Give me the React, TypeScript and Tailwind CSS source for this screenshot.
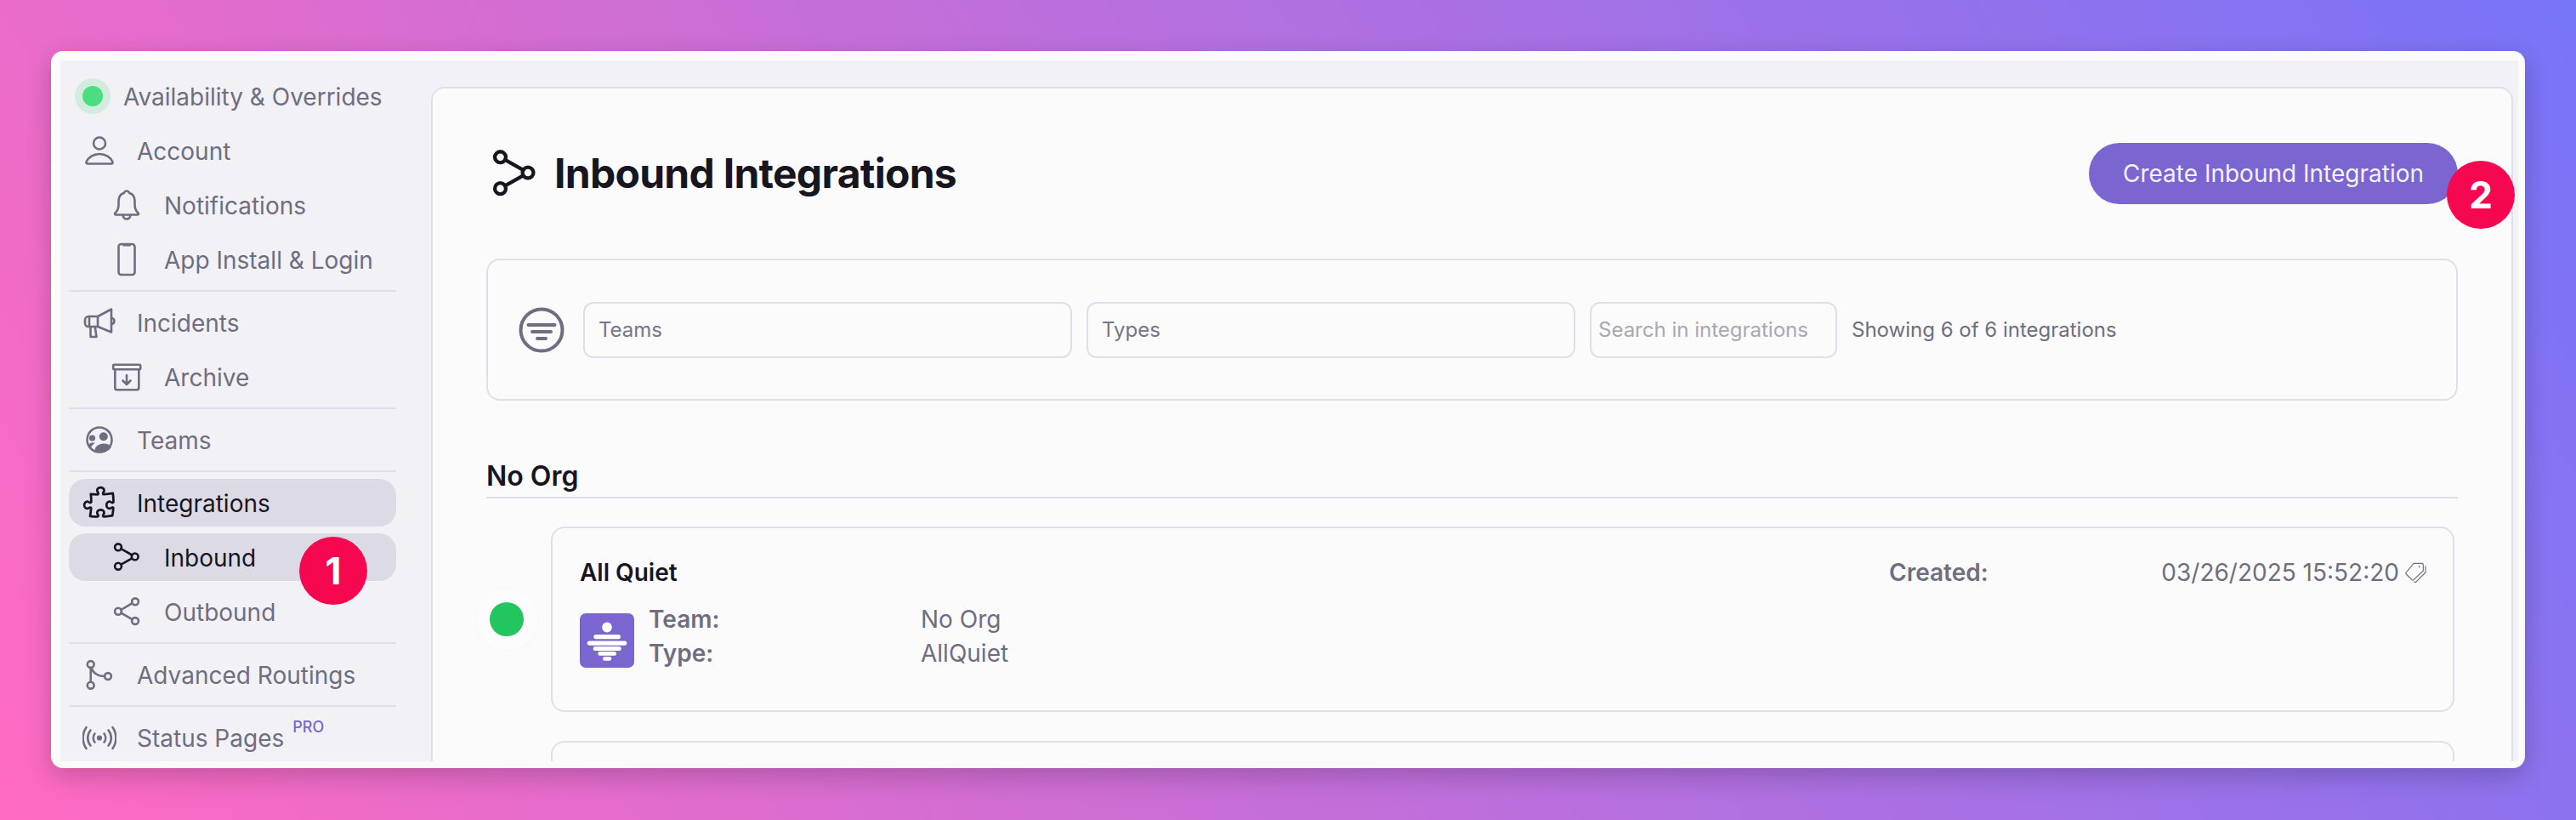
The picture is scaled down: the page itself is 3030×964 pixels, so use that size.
import { HiOutlinePuzzlePiece } from 'react-icons/hi2';

const gray = '#6f6e80';

function Icon({ children, className = '' }: { children: React.ReactNode; className?: string }) {
  return (
    <svg viewBox="0 0 40 40" fill="none" stroke="currentColor" strokeWidth="2.6" strokeLinecap="round" strokeLinejoin="round" className={`w-10 h-10 shrink-0 ${className}`}>
      {children}
    </svg>
  );
}

const UserIcon = () => (
  <Icon>
    <circle cx="20" cy="11.5" r="7" />
    <path d="M6 35.5h28c1.2 0 1.9-.9 1.5-1.9C33.3 28 27 24 20 24S6.700 28 4.500 33.600c-.4 1 .3 1.900 1.500 1.900z" />
  </Icon>
);
const BellIcon = () => (
  <Icon>
    <path d="M20 3.500c-1.500 0-2.500 1-3 2.200-4.500 1.500-6.500 5.300-6.500 9.300v5c0 4-1.500 7-4 9.500-.8.800-.3 2 .8 2h25.400c1.100 0 1.600-1.200.8-2-2.500-2.500-4-5.500-4-9.500v-5c0-4-2-7.800-6.500-9.300-.5-1.200-1.500-2.200-3-2.200z" />
    <path d="M15.500 31.500c.3 3.200 2 5 4.500 5s4.200-1.800 4.500-5" />
  </Icon>
);
const PhoneIcon = () => (
  <Icon>
    <rect x="10.500" y="2" width="19" height="36" rx="3" />
    <path d="M16.500 3.200h7" />
  </Icon>
);
const MegaphoneIcon = () => (
  <Icon>
    <path d="M34 4.500 18 13H7a4 4 0 0 0-4 4v4a4 4 0 0 0 4 4h11l16 6.500z" />
    <path d="M8 13v12M18 13v12M34 15a3.500 3.500 0 0 1 0 7" />
    <path d="M9.500 25v12h7l-1.800-12" />
  </Icon>
);
const ArchiveIcon = () => (
  <Icon>
    <rect x="4.200" y="5.800" width="32" height="5.500" rx="1" />
    <path d="M6.300 11.300V33a2.300 2.300 0 0 0 2.300 2.300h23.400a2.300 2.300 0 0 0 2.300-2.300V11.300" />
    <path d="M20 18v10.500M15.500 24.500l4.500 4.500 4.500-4.500" />
  </Icon>
);
const TeamsIcon = () => (
  <Icon>
    <circle cx="20" cy="20" r="14.500" />
    <circle cx="11.500" cy="18" r="3.600" fill="currentColor" stroke="none" />
    <circle cx="24.800" cy="16.300" r="5" fill="currentColor" stroke="none" />
    <path d="M14.500 33.500C14 28 19 24.500 25 24.500c4 0 7 1.500 9 4A15 15 0 0 1 14.500 33.500z" fill="currentColor" stroke="none" />
    <path d="M6.500 27c1-2.500 3-3.800 5.500-3.800 1 0 2 .2 3 .6-2.800 1.500-4.500 3.700-5.300 6.200z" fill="currentColor" stroke="none" />
  </Icon>
);
const InboundIcon = ({ className = '' }: { className?: string }) => (
  <Icon className={className}>
    <circle cx="10" cy="8.300" r="3.900" />
    <circle cx="29.700" cy="19.400" r="3.900" />
    <circle cx="10" cy="30.700" r="3.900" />
    <path d="m13.400 10.200 12.900 7.300M13.400 28.700l12.900-7.300" />
  </Icon>
);
const OutboundIcon = () => (
  <Icon>
    <circle cx="30" cy="8.300" r="3.900" />
    <circle cx="10" cy="19.700" r="3.900" />
    <circle cx="30" cy="31" r="3.900" />
    <path d="m26.600 10.200-13.200 7.600M13.400 21.600l13.200 7.500" />
  </Icon>
);
const RoutingIcon = () => (
  <Icon>
    <circle cx="9.700" cy="8" r="3.900" />
    <circle cx="9.700" cy="32.700" r="3.900" />
    <circle cx="30" cy="22" r="3.900" />
    <path d="M9.700 12v16.800M10.500 12c1.500 6 7.500 10 15.600 10" />
  </Icon>
);
const StatusIcon = () => (
  <Icon>
    <circle cx="20" cy="20.500" r="1.800" fill="currentColor" />
    <path d="M14.500 15.500a8 8 0 0 0 0 10M25.500 15.500a8 8 0 0 1 0 10" />
    <path d="M9.500 11.500a14 14 0 0 0 0 18M30.500 11.500a14 14 0 0 1 0 18" />
    <path d="M4.500 8a22 22 0 0 0 0 25M35.500 8a22 22 0 0 1 0 25" />
  </Icon>
);

function NavRow({ icon, label, sub, active, extra }: { icon: React.ReactNode; label: string; sub?: boolean; active?: boolean; extra?: React.ReactNode }) {
  return (
    <div className={`h-14 shrink-0 flex items-center gap-6 rounded-[20px] ${sub ? 'pl-12' : 'pl-4'} ${active ? 'bg-[#dcdbe5] text-[#17161f]' : 'text-[#6f6e80]'}`}>
      {icon}
      <span className="text-[28px] leading-none whitespace-nowrap pt-0.5">{label}</span>
      {extra}
    </div>
  );
}

const Divider = () => <div className="h-0.5 shrink-0 bg-[#e0dfe9]" />;

function Badge({ n, className }: { n: number; className: string }) {
  return (
    <div className={`absolute w-20 h-20 rounded-full bg-[#f5084f] text-white flex items-center justify-center text-[44px] font-bold leading-none ${className}`}>
      {n}
    </div>
  );
}

export default function App() {
  return (
    <div className="w-[3030px] h-[964px] pl-[60px] pt-[60px] overflow-hidden bg-[linear-gradient(60deg,#ff6ac1_0%,#7774f7_100%)] font-['Inter',sans-serif]">
      <div className="relative w-[2910px] h-[843px] pl-[11px] pt-[11px] pr-2 pb-2 rounded-[14px] bg-[#fbfbfb] shadow-[0_10px_30px_rgba(0,0,0,0.2)]">
        <div className="w-full h-full flex bg-[#f1f1f6] pt-[31px] pr-1.5 overflow-hidden">
          <aside className="w-[436px] shrink-0 -mt-[17px] pl-2.5 pr-[41px] flex flex-col gap-2">
            <div className="h-14 shrink-0 flex items-center gap-4 pl-[7px] text-[#6f6e80]">
              <div className="w-[42px] h-[42px] rounded-full bg-[#d4ecdf] flex items-center justify-center">
                <div className="w-6 h-6 rounded-full bg-[#4ade80]" />
              </div>
              <span className="text-[28px] leading-none whitespace-nowrap pt-0.5 -ml-px">Availability &amp; Overrides</span>
            </div>
            <NavRow icon={<UserIcon />} label="Account" />
            <NavRow icon={<BellIcon />} label="Notifications" sub />
            <NavRow icon={<PhoneIcon />} label="App Install & Login" sub />
            <Divider />
            <NavRow icon={<MegaphoneIcon />} label="Incidents" />
            <NavRow icon={<ArchiveIcon />} label="Archive" sub />
            <Divider />
            <NavRow icon={<TeamsIcon />} label="Teams" />
            <Divider />
            <NavRow icon={<HiOutlinePuzzlePiece className="w-11 h-11 -mx-0.5 shrink-0" />} label="Integrations" active />
            <NavRow icon={<InboundIcon />} label="Inbound" sub active />
            <NavRow icon={<OutboundIcon />} label="Outbound" sub />
            <Divider />
            <NavRow icon={<RoutingIcon />} label="Advanced Routings" />
            <Divider />
            <NavRow
              icon={<StatusIcon />}
              label="Status Pages"
              extra={<span className="-ml-3.5 mb-6 text-[18px] leading-none font-medium text-[#7b65d0]">PRO</span>}
            />
          </aside>

          <main className="flex-1 min-w-0 h-[calc(100%+2px)] bg-[#fbfbfb] border-2 border-b-0 border-[#e0dfe9] rounded-t-2xl px-[63px] overflow-hidden">
            <div className="mt-[63px] h-[74px] flex items-center justify-between">
              <div className="flex items-center gap-3.5 text-[#17161f]">
                <InboundIcon className="w-[66px] h-[66px]" />
                <h1 className="text-[48px] leading-none font-bold tracking-[-0.015em]">Inbound Integrations</h1>
              </div>
              <button className="h-[72px] w-[434px] rounded-full bg-[#7b65d0] text-[#f3f1fc] text-[28px]">Create Inbound Integration</button>
            </div>

            <div className="mt-[63px] h-[167px] border-2 border-[#e0dfe9] rounded-2xl flex items-center pl-[35px] gap-[17px]">
              <svg viewBox="0 0 56 56" className="w-14 h-14 shrink-0 mr-1" fill="none" stroke={gray} strokeWidth="4">
                <circle cx="28" cy="28" r="24.500" />
                <path d="M12.500 22h31M17 30h22M23 38h10" strokeLinecap="round" />
              </svg>
              <div className="w-[575px] h-[66px] border-2 border-[#e0dfe9] rounded-xl flex items-center pl-4 text-[24px] text-[#76758a]">Teams</div>
              <div className="w-[575px] h-[66px] border-2 border-[#e0dfe9] rounded-xl flex items-center pl-4 text-[24px] text-[#76758a]">Types</div>
              <div className="w-[291px] h-[66px] border-2 border-[#e0dfe9] rounded-xl flex items-center pl-2 text-[24px] text-[#a9a8b6] whitespace-nowrap overflow-hidden">Search in integrations</div>
              <span className="text-[24px] text-[#6f6e80] whitespace-nowrap">Showing 6 of 6 integrations</span>
            </div>

            <div className="mt-[63px] h-[52px] border-b-2 border-[#e0dfe9] text-[32px] font-semibold text-[#17161f] leading-none pt-2.5">No Org</div>

            <div className="mt-[33px] -ml-3.5 pr-1 flex items-center gap-3.5">
              <div className="w-[76px] h-[76px] shrink-0 rounded-full bg-[#fcfcfc] border-2 border-[#f9f9fa] flex items-center justify-center">
                <div className="w-10 h-10 rounded-full bg-[#22c55e]" />
              </div>
              <div className="flex-1 h-[218px] border-2 border-[#e0dfe9] rounded-2xl pl-8 pr-[31px] pt-10 text-[28px] leading-none">
                <div className="flex justify-between h-6 items-center">
                  <span className="font-semibold text-[#17161f]">All Quiet</span>
                  <div className="flex items-center w-[632px] text-[#6f6e80]">
                    <span className="font-semibold">Created:</span>
                    <span className="ml-auto">03/26/2025 15:52:20</span>
                    <svg viewBox="0 0 75 72" className="w-[25px] h-6 ml-[7px]" fill="none" stroke={gray} strokeWidth="3.5" strokeLinejoin="round" strokeLinecap="round">
                      <path d="M30 4h30q4 0 4 4v22L30 62q-3 3-6 0L4 42q-3-3 0-6z" />
                      <path d="M72 14v22L38 70q-2 1-6-1" />
                      <circle cx="50" cy="16" r="3" fill={gray} stroke="none" />
                    </svg>
                  </div>
                </div>
                <div className="mt-[34px] flex items-start">
                  <svg viewBox="0 0 64 64" className="w-16 h-16 shrink-0 mt-0.5" fill="#ffffff">
                    <rect width="64" height="64" rx="7" fill="#7b65d0" />
                    <ellipse cx="32" cy="16.500" rx="5.800" ry="6" />
                    <rect x="16.300" y="25" width="31.700" height="5.200" rx="2.600" />
                    <rect x="8.700" y="32.500" width="46.600" height="5.200" rx="2.600" />
                    <rect x="15.700" y="39" width="33" height="5" rx="2.500" />
                    <rect x="21.300" y="45" width="21.700" height="4.800" rx="2.400" />
                    <rect x="27" y="51" width="10.300" height="4.800" rx="2.400" />
                  </svg>
                  <div className="ml-[17px] -mt-[5px] text-[#6f6e80] grid grid-cols-[320px_auto] gap-y-3">
                    <span className="font-semibold">Team:</span>
                    <span>No Org</span>
                    <span className="font-semibold">Type:</span>
                    <span>AllQuiet</span>
                  </div>
                </div>
              </div>
            </div>

            <div className="mt-[34px] ml-[76px] mr-1 h-[200px] border-2 border-[#e0dfe9] rounded-2xl" />
          </main>
        </div>
        <Badge n={1} className="left-[292px] top-[571px]" />
        <Badge n={2} className="left-[2818px] top-[129px]" />
      </div>
    </div>
  );
}
